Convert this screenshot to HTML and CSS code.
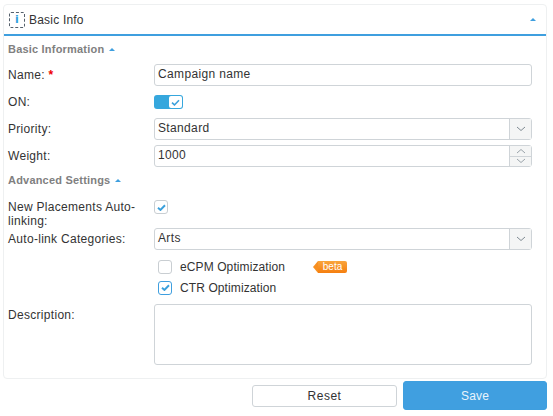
FILE: index.html
```html
<!DOCTYPE html>
<html lang="en">
<head>
    <meta charset="UTF-8">
    <title>Basic Info</title>
    <link rel="stylesheet" href="styles.css">
</head>
<body>
    <div class="card">
        <div class="card-header">
            <span class="info-icon">i</span>
            <span class="card-title">Basic Info</span>
            <span class="arrow-up card-arrow"></span>
        </div>
        <div class="card-body">
            <div class="section-title">Basic Information<span class="arrow-up"></span></div>
            <div class="row row-name">
                <label class="row-label">Name: <span class="required">*</span></label>
                <input class="text-input" type="text" value="Campaign name">
            </div>
            <div class="row row-on">
                <label class="row-label">ON:</label>
                <div class="toggle">
                    <span class="toggle-knob">
                        <svg width="9" height="7" viewBox="0 0 10 8"><path d="M1 4.2 3.8 6.8 9 1.4" fill="none" stroke="#3aa0dc" stroke-width="1.8"/></svg>
                    </span>
                </div>
            </div>
            <div class="row row-priority">
                <label class="row-label">Priority:</label>
                <div class="select-box">
                    <span class="select-value">Standard</span>
                    <span class="select-btn">
                        <svg width="10" height="6" viewBox="0 0 10 6"><path d="M1 1 5 4.5 9 1" fill="none" stroke="#7f8a92" stroke-width="1"/></svg>
                    </span>
                </div>
            </div>
            <div class="row row-weight">
                <label class="row-label">Weight:</label>
                <div class="select-box">
                    <span class="select-value">1000</span>
                    <span class="spin-btns">
                        <span class="spin-btn">
                            <svg width="10" height="6" viewBox="0 0 10 6"><path d="M1 5 5 1.5 9 5" fill="none" stroke="#9aa3aa" stroke-width="1"/></svg>
                        </span>
                        <span class="spin-btn">
                            <svg width="10" height="6" viewBox="0 0 10 6"><path d="M1 1 5 4.5 9 1" fill="none" stroke="#9aa3aa" stroke-width="1"/></svg>
                        </span>
                    </span>
                </div>
            </div>
            <div class="section-title section-advanced">Advanced Settings<span class="arrow-up"></span></div>
            <div class="row row-auto">
                <label class="row-label label-wrap">New Placements Auto-linking:</label>
                <span class="check">
                    <svg width="9" height="7" viewBox="0 0 10 8"><path d="M1 4.2 3.8 6.8 9 1.4" fill="none" stroke="#3aa0dc" stroke-width="2.2"/></svg>
                </span>
            </div>
            <div class="row row-cats">
                <label class="row-label">Auto-link Categories:</label>
                <div class="select-box">
                    <span class="select-value">Arts</span>
                    <span class="select-btn">
                        <svg width="10" height="6" viewBox="0 0 10 6"><path d="M1 1 5 4.5 9 1" fill="none" stroke="#7f8a92" stroke-width="1"/></svg>
                    </span>
                </div>
            </div>
            <div class="option option-ecpm">
                <span class="check"></span>
                <span class="option-text">eCPM Optimization</span>
                <span class="beta">beta</span>
            </div>
            <div class="option option-ctr">
                <span class="check check-on">
                    <svg width="9" height="7" viewBox="0 0 10 8"><path d="M1 4.2 3.8 6.8 9 1.4" fill="none" stroke="#3aa0dc" stroke-width="2.2"/></svg>
                </span>
                <span class="option-text">CTR Optimization</span>
            </div>
            <div class="row row-desc">
                <label class="row-label">Description:</label>
                <textarea class="text-area"></textarea>
            </div>
        </div>
    </div>
    <div class="actions">
        <button class="reset-button">Reset</button>
        <button class="save-button">Save</button>
    </div>
</body>
</html>
```

FILE: styles.css
```css
body {
    margin: 0;
    padding: 4px 6px 0 3px;
    width: 544px;
    font-family: "Liberation Sans", Arial, sans-serif;
    font-size: 12px;
    letter-spacing: 0.3px;
    color: #333;
    background: #fff;
}

.card {
    box-sizing: border-box;
    height: 375px;
    border: 1px solid #eef0f1;
    border-radius: 4px;
}

.card-header {
    box-sizing: border-box;
    height: 31px;
    display: flex;
    align-items: center;
    padding: 0 5px 0 5px;
    border-bottom: 2px solid #3f9fdf;
}

.info-icon {
    box-sizing: border-box;
    width: 16px;
    height: 16px;
    border: 1px dashed #55606c;
    border-radius: 2px;
    color: #2f9fe0;
    font-family: "DejaVu Sans", sans-serif;
    font-weight: bold;
    font-size: 11px;
    line-height: 14px;
    text-align: center;
    letter-spacing: 0;
}

.card-title {
    margin-left: 4px;
    letter-spacing: 0.2px;
}

.arrow-up {
    display: inline-block;
    width: 0;
    height: 0;
    margin-left: 5px;
    vertical-align: 2px;
    border-left: 3px solid transparent;
    border-right: 3px solid transparent;
    border-bottom: 3px solid #3f9fdf;
}

.card-arrow {
    margin-left: auto;
    margin-right: 5px;
}

.card-body {
    padding: 0 14px 0 4px;
}

.section-title {
    height: 14px;
    line-height: 14px;
    margin-top: 6px;
    font-size: 11px;
    font-weight: bold;
    letter-spacing: 0.2px;
    color: #808080;
}

.section-advanced {
    margin-top: 6px;
}

.row {
    display: flex;
    align-items: flex-start;
}

.row-label {
    flex: none;
    width: 146px;
    line-height: 22px;
}

.required {
    color: #e00;
    font-weight: bold;
}

.text-input, .text-area {
    box-sizing: border-box;
    flex: 1;
    margin: 0;
    border: 1px solid #cfd4d8;
    border-radius: 3px;
    outline: none;
    padding: 0 3px;
    font: inherit;
    letter-spacing: 0.35px;
    color: #333;
    background: #fff;
    resize: none;
}

.text-input {
    height: 22px;
    padding-bottom: 3px;
}

.text-area {
    height: 61px;
}

.row-name {
    margin-top: 8px;
}

.row-on {
    margin-top: 9px;
    height: 15px;
}

.row-on .row-label {
    line-height: 15px;
}

.toggle {
    box-sizing: border-box;
    width: 29px;
    height: 14px;
    display: flex;
    justify-content: flex-end;
    padding: 1px;
    background: #36a7dd;
    border-radius: 3px;
}

.toggle-knob {
    width: 13px;
    height: 12px;
    display: flex;
    align-items: center;
    justify-content: center;
    background: #fff;
    border-radius: 2px;
}

.select-box {
    box-sizing: border-box;
    flex: 1;
    height: 22px;
    display: flex;
    border: 1px solid #cfd4d8;
    border-radius: 3px;
    background: #fff;
}

.select-value {
    flex: 1;
    padding-left: 3px;
    line-height: 19px;
    letter-spacing: 0.35px;
}

.select-btn {
    width: 21px;
    display: flex;
    align-items: center;
    justify-content: center;
    border-left: 1px solid #cfd4d8;
    background: #f4f5f5;
}

.spin-btns {
    width: 21px;
    display: flex;
    flex-direction: column;
    border-left: 1px solid #cfd4d8;
    background: #f4f5f5;
}

.spin-btn {
    flex: 1;
    display: flex;
    align-items: center;
    justify-content: center;
}

.spin-btn + .spin-btn {
    border-top: 1px solid #cfd4d8;
}

.row-priority {
    margin-top: 8px;
}

.row-weight {
    margin-top: 5px;
}

.row-auto {
    margin-top: 13px;
    height: 28px;
}

.label-wrap {
    line-height: 14px;
}

.check {
    box-sizing: border-box;
    flex: none;
    width: 14px;
    height: 14px;
    display: flex;
    align-items: center;
    justify-content: center;
    border: 1px solid #c9ced2;
    border-radius: 3px;
    background: #fff;
}

.check-on {
    border-color: #3f9fdf;
}

.option {
    height: 15px;
    display: flex;
    align-items: center;
    margin-left: 150px;
}

.option-text {
    margin-left: 8px;
    width: 133px;
    letter-spacing: 0.1px;
}

.option-ecpm {
    margin-top: 9px;
}

.option-ctr {
    margin-top: 6px;
}

.beta {
    position: relative;
    margin-left: 5px;
    width: 29px;
    height: 12px;
    line-height: 12px;
    text-align: center;
    font-size: 10px;
    letter-spacing: 0;
    color: #fff;
    background: linear-gradient(#f9a43c, #f57f0f);
    border-radius: 0 2px 2px 0;
}

.beta::before {
    content: "";
    position: absolute;
    left: -5px;
    top: 0;
    border-top: 6px solid transparent;
    border-bottom: 6px solid transparent;
    border-right: 5px solid #f78f20;
}

.row-desc {
    margin-top: 9px;
}

.actions {
    display: flex;
    align-items: center;
    justify-content: flex-end;
    gap: 6px;
    margin-top: 2px;
}

.reset-button, .save-button {
    box-sizing: border-box;
    font: inherit;
    letter-spacing: 0.5px;
    border-radius: 3px;
    cursor: pointer;
}

.reset-button {
    width: 145px;
    height: 22px;
    border: 1px solid #cfd4d8;
    background: #fff;
    color: #333;
}

.save-button {
    width: 144px;
    height: 29px;
    border: 1px solid #3f9fdf;
    background: #409fe0;
    color: #e8f4fc;
    letter-spacing: 0.2px;
}
```
